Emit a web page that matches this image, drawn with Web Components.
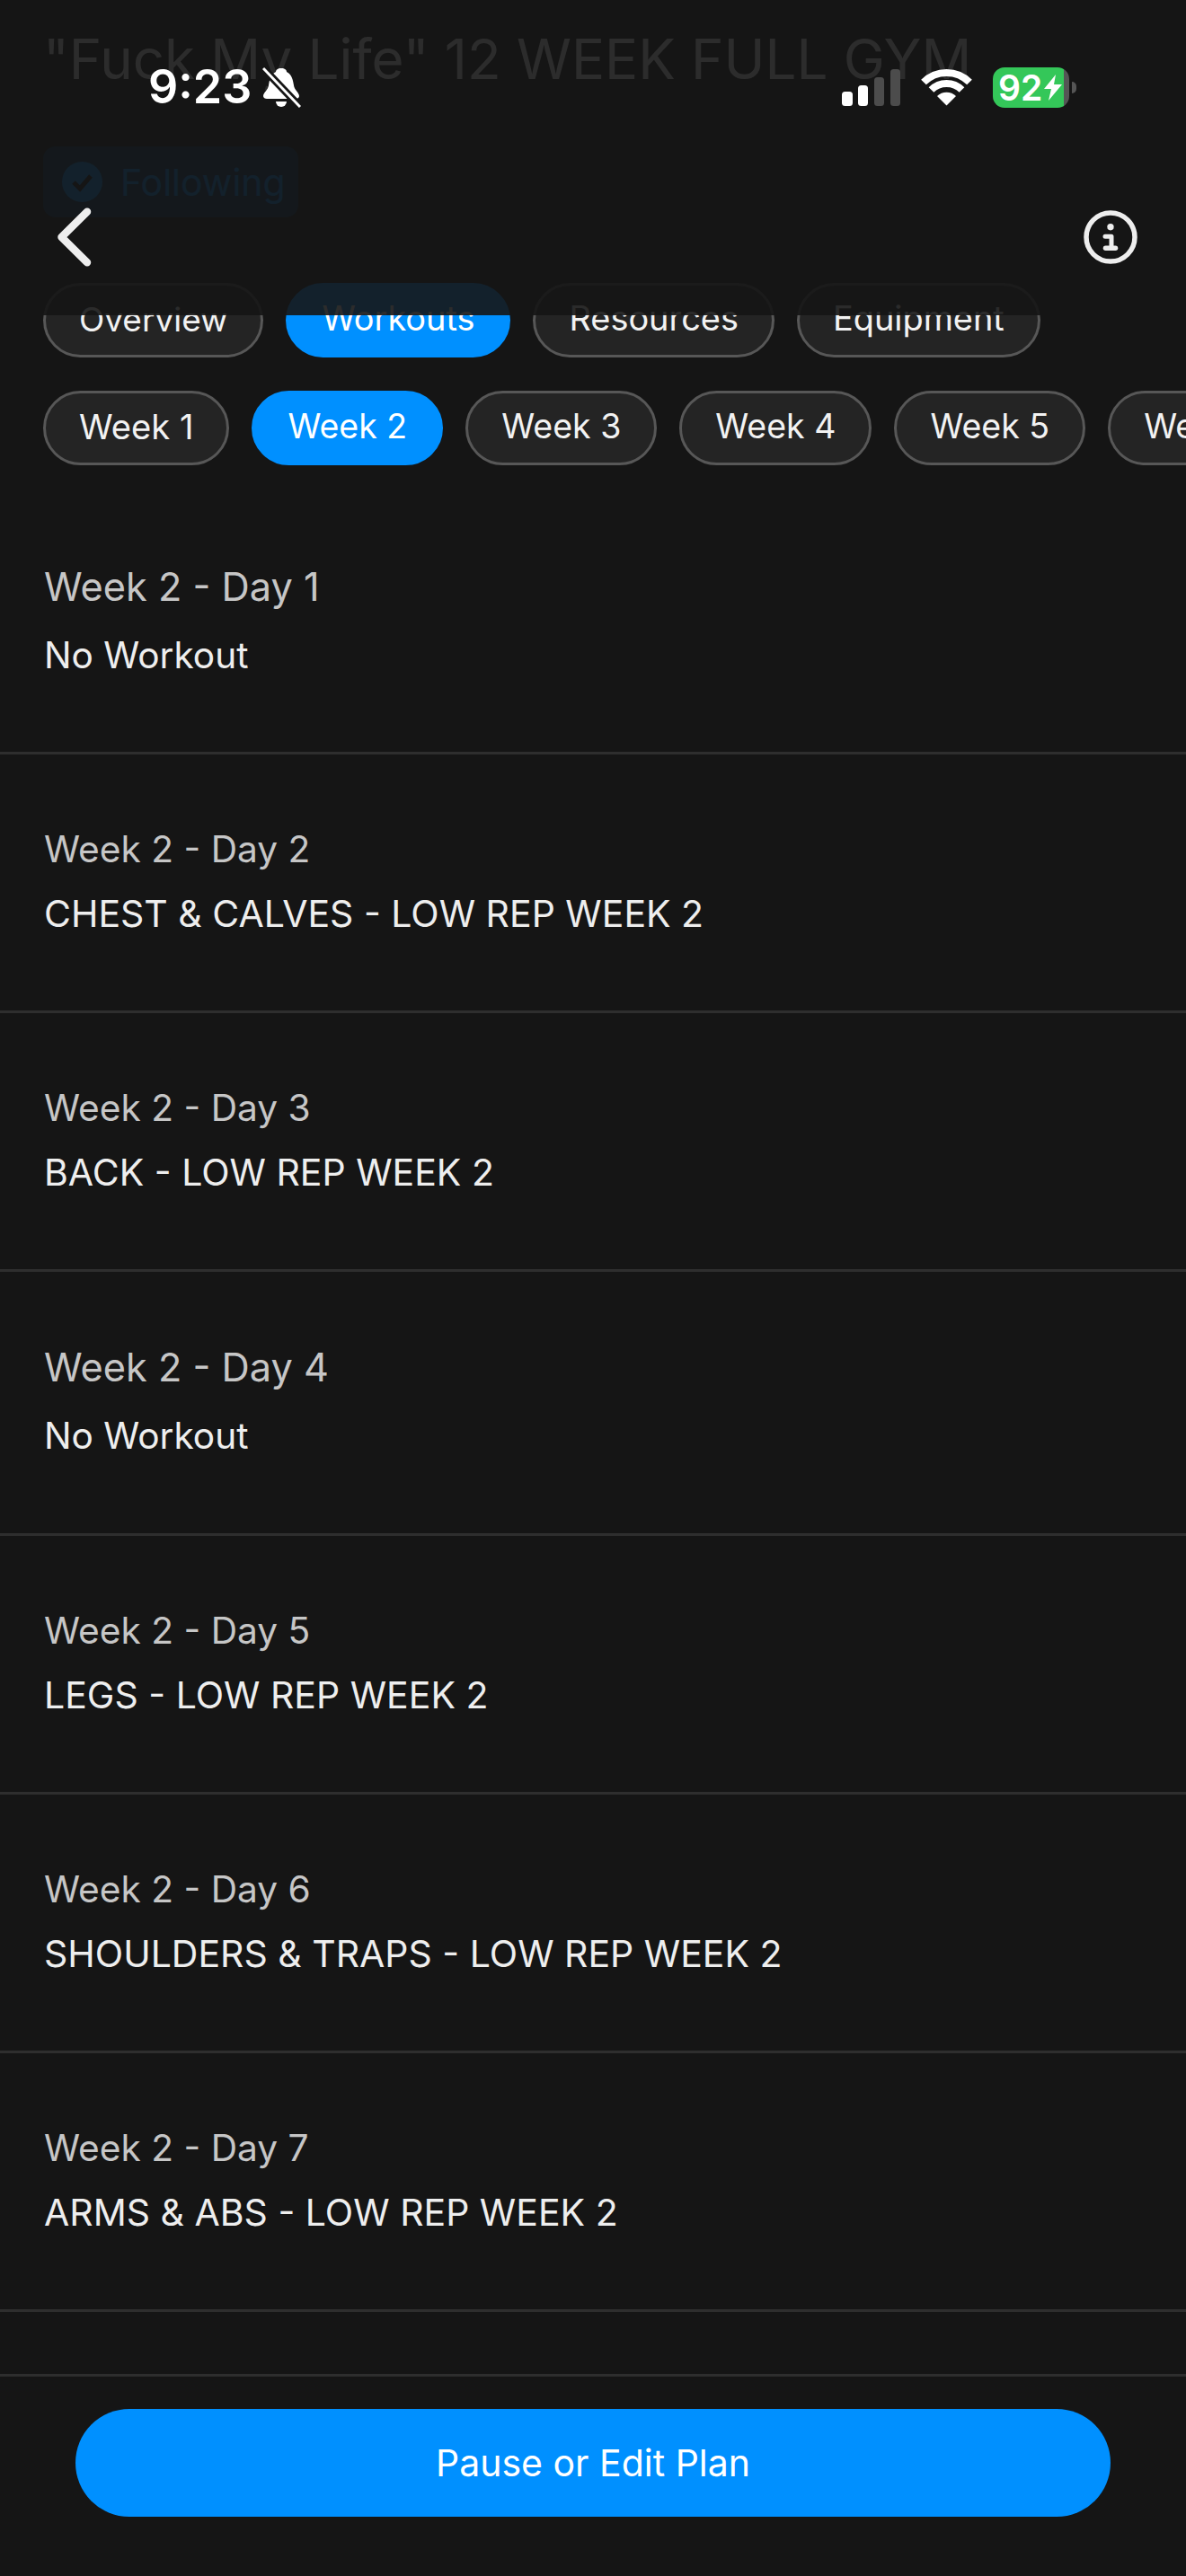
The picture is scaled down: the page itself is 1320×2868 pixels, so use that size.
<!DOCTYPE html>
<html lang="en">
<head>
<meta charset="UTF-8">
<title>Plan workouts</title>
<style>
    html, body { margin: 0; background: #151515; }
    body { font-family: Inter, "Noto Sans", "Liberation Sans", sans-serif; color: #eee; }
    .tabs { --pill-size: 37.9px; }
    .weeks { --pill-size: 37.5px; }
</style>
</head>
<body>
<plan-screen>
    <plan-heading>"Fuck My Life" 12 WEEK FULL GYM</plan-heading>
    <follow-badge>Following</follow-badge>
    <pill-row class="tabs">
        <pill-tab style="--pill-size: 37px">Overview</pill-tab>
        <pill-tab active>Workouts</pill-tab>
        <pill-tab>Resources</pill-tab>
        <pill-tab>Equipment</pill-tab>
    </pill-row>
    <pill-row class="weeks">
        <pill-tab style="--pill-size: 38.2px">Week 1</pill-tab>
        <pill-tab active>Week 2</pill-tab>
        <pill-tab>Week 3</pill-tab>
        <pill-tab>Week 4</pill-tab>
        <pill-tab>Week 5</pill-tab>
        <pill-tab>Week 6</pill-tab>
    </pill-row>
    <day-list>
        <day-row first rest day="Week 2 - Day 1">No Workout</day-row>
        <day-row day="Week 2 - Day 2">CHEST &amp; CALVES - LOW REP WEEK 2</day-row>
        <day-row day="Week 2 - Day 3">BACK - LOW REP WEEK 2</day-row>
        <day-row rest day="Week 2 - Day 4">No Workout</day-row>
        <day-row day="Week 2 - Day 5">LEGS - LOW REP WEEK 2</day-row>
        <day-row day="Week 2 - Day 6">SHOULDERS &amp; TRAPS - LOW REP WEEK 2</day-row>
        <day-row day="Week 2 - Day 7">ARMS &amp; ABS - LOW REP WEEK 2</day-row>
    </day-list>
    <plan-footer>Pause or Edit Plan</plan-footer>
    <top-bar slot="overlay"></top-bar>
</plan-screen>

<script>
    // small helper so every element gets an open shadow root from a string
    class Base extends HTMLElement {
        constructor(html) {
            super();
            this.attachShadow({mode: 'open'}).innerHTML = html;
        }
    }

    class PlanScreen extends Base {
        constructor() {
            super(`<style>
                :host { display: flex; flex-direction: column; position: relative; width: 1320px; height: 2868px; overflow: hidden; background: #151515; }
                .scroll { flex: 1; min-height: 0; overflow: hidden; display: flex; flex-direction: column; }
            </style>
            <div class="scroll"><slot></slot></div>
            <slot name="footer"></slot>
            <slot name="overlay"></slot>`);
        }
        connectedCallback() {
            this.querySelector('plan-footer').slot = 'footer';
        }
    }

    class PlanHeading extends Base {
        constructor() {
            super(`<style>
                :host { display: block; margin: 26px 0 57px 48px; font-size: 61.8px; line-height: 80px; font-weight: 400; white-space: nowrap; color: #fff; }
            </style><slot></slot>`);
        }
    }

    class FollowBadge extends Base {
        constructor() {
            super(`<style>
                :host { display: flex; align-items: center; gap: 20px; align-self: flex-start; box-sizing: border-box; width: 284px; height: 79px; margin: 0 0 73px 48px; padding: 0 0 0 21px; border-radius: 14px; background: #0c3a5e; color: #0090ff; font-size: 41px; }
                svg { width: 45px; height: 45px; display: block; }
            </style>
            <svg viewBox="0 0 45 45"><circle cx="22.5" cy="22.5" r="22.5" fill="#0090ff"/><path d="M13 23l7 7 12-14" fill="none" stroke="#151515" stroke-width="5"/></svg>
            <slot></slot>`);
        }
    }

    class PillRow extends Base {
        constructor() {
            super(`<style>
                :host { display: flex; gap: 25px; padding-left: 48px; margin-bottom: 37px; flex-shrink: 0; }
            </style><slot></slot>`);
        }
    }

    class PillTab extends Base {
        constructor() {
            super(`<style>
                :host { display: flex; align-items: center; flex-shrink: 0; box-sizing: border-box; height: 83px; padding: 0 37px 3px; border: 3px solid #575757; border-radius: 42px; background: #242424; color: #f2f2f2; font-size: var(--pill-size); line-height: 1; white-space: nowrap; }
                :host([active]) { background: #0090ff; border-color: #0090ff; color: #fff; }
            </style><slot></slot>`);
        }
    }

    class DayList extends Base {
        constructor() {
            super(`<style>:host { display: block; margin-top: -8px; }</style><slot></slot>`);
        }
    }

    class DayRow extends Base {
        constructor() {
            super(`<style>
                :host { display: block; box-sizing: border-box; height: 288px; padding: 82px 0 0 49px; border-bottom: 3px solid #2e2e2e; }
                :host([rest]) { height: 294px; }
                :host([first]) { height: 293px; }
                .day { font-size: 40.7px; line-height: 48px; color: #c6c6c6; }
                .name { margin-top: 23px; font-size: 41px; line-height: 48px; color: #eee; white-space: nowrap; }
                :host([rest]) .day { font-size: 43.3px; }
                :host([rest]) .name { margin-top: 29px; font-size: 40.6px; }
            </style>
            <div class="day"></div>
            <div class="name"><slot></slot></div>`);
        }
        connectedCallback() {
            this.shadowRoot.querySelector('.day').textContent = this.getAttribute('day');
        }
    }

    class PlanFooter extends Base {
        constructor() {
            super(`<style>
                :host { display: block; box-sizing: border-box; height: 225px; padding: 36px 84px 0; border-top: 3px solid #2e2e2e; }
                .btn { display: flex; align-items: center; justify-content: center; height: 120px; border-radius: 60px; background: #0090ff; color: #fff; font-size: 41px; }
            </style><div class="btn"><slot></slot></div>`);
        }
    }

    class StatusBar extends Base {
        constructor() {
            super(`<style>
                :host { display: flex; align-items: center; height: 46px; padding: 0 122px 0 165px; margin-top: 74px; color: #fff; }
                .time { font-size: 52px; font-weight: 600; line-height: 46px; width: 127px; }
                .bell { width: 43px; height: 46px; display: block; }
                .sp { flex: 1; }
                .sig { width: 65px; height: 41px; display: block; margin-right: 23px; }
                .wifi { width: 57px; height: 42px; display: block; margin-right: 23px; }
                .bat { position: relative; display: flex; align-items: center; box-sizing: border-box; width: 85px; height: 45px; padding-left: 6px; border-radius: 13px; background: linear-gradient(to right, #34c759 93%, #555 93%); font-size: 39px; font-weight: 600; }
                .bolt { width: 20px; height: 29px; margin-left: 2px; display: block; flex-shrink: 0; }
                .nub { width: 5px; height: 13px; margin-left: 3px; border-radius: 0 6px 6px 0; background: #555; }
            </style>
            <span class="time">9:23</span>
            <svg class="bell" viewBox="0 0 43 46">
                <path fill="#fff" d="M21 2C25 2 27 4 27 6C33 9 34 15 35 21C35.500 26 41 29 41 33C41 35 39 36 37 36H5C3 36 1 35 1 33C1 29 6.500 26 7 21C8 15 9 9 15 6C15 4 17 2 21 2Z"/>
                <path fill="#fff" d="M15 39H27A6 6 0 0 1 15 39Z"/>
                <path stroke="#151515" stroke-width="8.500" d="M1 2L42 45"/>
                <path stroke="#fff" stroke-width="3" d="M1 2L42 45"/>
            </svg>
            <span class="sp"></span>
            <svg class="sig" viewBox="0 0 65 41">
                <rect x="0" y="25" width="12" height="16" rx="3.500" fill="#fff"/>
                <rect x="18" y="18" width="11" height="23" rx="3.500" fill="#fff"/>
                <rect x="36" y="9" width="11" height="32" rx="3.500" fill="#4c4c4c"/>
                <rect x="54" y="0" width="11" height="41" rx="3.500" fill="#4c4c4c"/>
            </svg>
            <svg class="wifi" viewBox="0 0 57 42">
                <path fill="none" stroke="#fff" stroke-width="8" d="M3 15.500A36 36 0 0 1 54 15.500"/>
                <path fill="none" stroke="#fff" stroke-width="8" d="M11.500 24A24 24 0 0 1 45.500 24"/>
                <path fill="#fff" d="M28.500 41.500L18 31A15 15 0 0 1 39 31Z"/>
            </svg>
            <span class="bat">92<svg class="bolt" viewBox="0 0 20 29"><path fill="#fff" d="M13 0L0 16H8L5 29L20 11H11Z"/></svg></span>
            <span class="nub"></span>`);
        }
    }

    class TopBar extends Base {
        constructor() {
            super(`<style>
                :host { display: flex; flex-direction: column; position: absolute; left: 0; top: 0; width: 100%; height: 351px; background: rgba(21,21,21,.9); }
                .nav { display: flex; justify-content: space-between; align-items: center; margin-top: 111px; padding: 0 54px 0 60px; }
                svg { display: block; }
            </style>
            <status-bar></status-bar>
            <div class="nav">
                <svg width="44" height="66" viewBox="0 0 44 66"><path d="M37 4.700L8.500 33L37 61.200" fill="none" stroke="#eee" stroke-width="8.500" stroke-linecap="round" stroke-linejoin="round"/></svg>
                <svg width="60" height="60" viewBox="0 0 60 60">
                    <circle cx="30" cy="30" r="27" fill="none" stroke="#eee" stroke-width="5.500"/>
                    <circle cx="30" cy="18.700" r="3.700" fill="#eee"/>
                    <path d="M24 29.200H31M31 29.200V42" fill="none" stroke="#eee" stroke-width="5" stroke-linecap="round" stroke-linejoin="round"/>
                    <path d="M24.500 42.300H35.500" fill="none" stroke="#eee" stroke-width="5.500" stroke-linecap="round"/>
                </svg>
            </div>`);
        }
    }

    customElements.define('plan-heading', PlanHeading);
    customElements.define('follow-badge', FollowBadge);
    customElements.define('pill-row', PillRow);
    customElements.define('pill-tab', PillTab);
    customElements.define('day-list', DayList);
    customElements.define('day-row', DayRow);
    customElements.define('plan-footer', PlanFooter);
    customElements.define('status-bar', StatusBar);
    customElements.define('top-bar', TopBar);
    customElements.define('plan-screen', PlanScreen);
</script>
</body>
</html>
